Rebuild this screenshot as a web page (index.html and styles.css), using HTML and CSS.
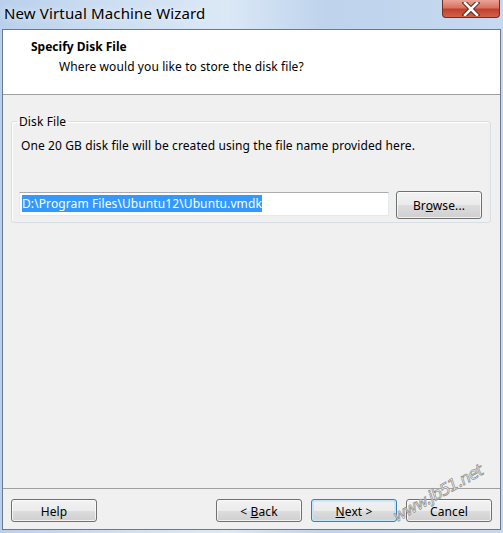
FILE: index.html
```html
<!DOCTYPE html>
<html>
<head>
<meta charset="utf-8">
<link rel="stylesheet" href="styles.css">
</head>
<body>
<div class="window">
  <div class="titlebar">
    <span class="title">New Virtual Machine Wizard</span>
    <div class="close">
      <svg width="20" height="14" viewBox="0 0 20 14"><path d="M4 1 L16 13 M16 1 L4 13" stroke="#5a1d14" stroke-width="4.5" stroke-linecap="square"/><path d="M4 1 L16 13 M16 1 L4 13" stroke="#ffffff" stroke-width="2.6" stroke-linecap="square"/></svg>
    </div>
  </div>
  <div class="client">
    <div class="header">
      <div class="h-title">Specify Disk File</div>
      <div class="h-sub">Where would you like to store the disk file?</div>
    </div>
    <div class="content">
      <fieldset class="group">
        <legend>Disk File</legend>
        <p class="desc">One 20 GB disk file will be created using the file name provided here.</p>
        <div class="row">
          <div class="input"><span class="sel">D:\Program Files\Ubuntu12\Ubuntu.vmdk</span></div>
          <button class="btn browse">Br<u>o</u>wse...</button>
        </div>
      </fieldset>
    </div>
    <div class="footer">
      <button class="btn">Help</button>
      <div class="spacer"></div>
      <button class="btn">&lt; <u>B</u>ack</button>
      <button class="btn default"><u>N</u>ext &gt;</button>
      <button class="btn">Cancel</button>
    </div>
  </div>
  <div class="watermark">www.jb51.net</div>
</div>
</body>
</html>
```

FILE: styles.css
```css
* { box-sizing: border-box; }
html, body { margin: 0; padding: 0; }
body {
  width: 503px;
  height: 533px;
  overflow: hidden;
  font-family: "Noto Sans", "DejaVu Sans", sans-serif;
  font-size: 12px;
  letter-spacing: 0.1px;
  color: #000;
  background: #c3d7ef;
}
.window {
  position: relative;
  width: 503px;
  height: 533px;
  background: linear-gradient(to right, #b9d0ec 0%, #cfe0f3 25%, #dbe8f6 45%, #bed3ec 65%, #c6d9f0 100%);
}
.titlebar {
  height: 29px;
  display: flex;
  align-items: flex-start;
  justify-content: space-between;
  padding-left: 4px;
}
.title {
  font-size: 15px;
  line-height: 20px;
  margin-top: 3px;
  color: #000;
  letter-spacing: 0.15px;
  text-shadow: 0 0 6px rgba(255,255,255,0.9);
}
.close {
  width: 58px;
  height: 18px;
  margin-right: 3px;
  border: 1px solid #6d2e24;
  border-top: none;
  border-radius: 0 0 4px 4px;
  background: linear-gradient(to bottom, #e9a597 0%, #d77361 45%, #c2402a 55%, #d0634d 100%);
  display: flex;
  align-items: center;
  justify-content: center;
}
.client {
  margin-left: 2px;
  width: 499px;
  height: 501px;
  border: 1px solid #6a7a8e;
  background: #f0f0f0;
  display: flex;
  flex-direction: column;
}
.header {
  height: 65px;
  background: #fff;
  border-bottom: 1px solid #a0a0a0;
  padding: 9px 0 0 28px;
}
.h-title {
  font-weight: bold;
  line-height: 15px;
  letter-spacing: 0;
}
.h-sub {
  line-height: 15px;
  margin-top: 5px;
  padding-left: 28px;
}
.content {
  flex: 1;
  padding: 19px 9px 0 8px;
}
.group {
  margin: 0;
  padding: 8px 8px 3px 7px;
  border: 1px solid #d5dfe5;
  border-radius: 3px;
  box-shadow: inset 1px 1px 0 #fff;
  min-width: 0;
}
.group legend {
  padding: 0 2px;
  margin-left: -2px;
  line-height: 15px;
}
.desc {
  margin: 1px 0 0 2px;
  line-height: 15px;
}
.row {
  display: flex;
  align-items: flex-start;
  margin-top: 38px;
  gap: 7px;
}
.input {
  width: 370px;
  height: 24px;
  margin-top: 1px;
  background: #fff;
  border: 1px solid #e3e9ef;
  border-top-color: #abadb3;
  padding: 2px 0 0 2px;
}
.sel {
  display: inline-block;
  background: #3399ff;
  color: #fff;
  line-height: 17px;
  height: 17px;
}
.btn {
  width: 86px;
  height: 23px;
  font: inherit;
  font-size: 12px;
  letter-spacing: 0.1px;
  color: #000;
  border: 1px solid #707070;
  border-radius: 3px;
  background: linear-gradient(to bottom, #f2f2f2 0%, #ebebeb 50%, #dddddd 51%, #cfcfcf 100%);
  box-shadow: inset 0 0 0 1px rgba(255,255,255,0.7);
  padding: 1px 0 0 0;
  line-height: 19px;
}
.browse {
  height: 28px;
}
.btn u { text-decoration: underline; }
.default {
  border-color: #3c7fb1;
  box-shadow: inset 0 0 0 1px #c6e7f9, inset 0 0 0 2px rgba(180,225,250,0.6);
}
.footer {
  border-top: 1px solid #a0a0a0;
  height: 41px;
  display: flex;
  align-items: flex-start;
  gap: 9px;
  padding: 10px 8px 0 8px;
}
.spacer { flex: 1; }
.watermark {
  position: absolute;
  left: 394px;
  top: 508px;
  font-family: "DejaVu Sans", sans-serif;
  font-style: italic;
  font-size: 16px;
  color: #fff;
  -webkit-text-stroke: 0.7px #8a8a8a;
  transform: rotate(-29deg);
  transform-origin: left center;
  white-space: nowrap;
  letter-spacing: -0.8px;
}
```
